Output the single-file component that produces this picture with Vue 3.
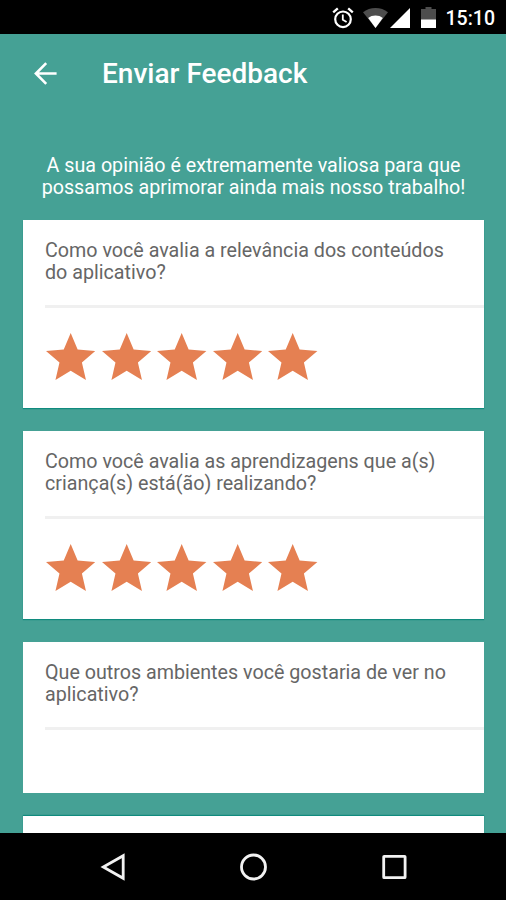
<script setup>
const intro = [
  "A sua opinião é extremamente valiosa para que",
  "possamos aprimorar ainda mais nosso trabalho!",
];

const cards = [
  {
    lines: ["Como você avalia a relevância dos conteúdos", "do aplicativo?"],
    stars: 5,
  },
  {
    lines: ["Como você avalia as aprendizagens que a(s)", "criança(s) está(ão) realizando?"],
    stars: 5,
  },
  {
    lines: ["Que outros ambientes você gostaria de ver no", "aplicativo?"],
    stars: 0,
  },
];
</script>

<template>
  <div class="screen">
    <div class="status-bar">
      <svg class="alarm" width="22" height="22" viewBox="0 0 22 22" fill="none" stroke="#fff">
        <circle cx="11" cy="12.3" r="7.8" stroke-width="2.2" />
        <path d="M1.2 5.3L5.8 1.4M20.8 5.3L16.2 1.4" stroke-width="2.4" />
        <path d="M10.8 7.5v5.2l3.8 2.3" stroke-width="1.8" />
      </svg>
      <svg class="wifi" width="25" height="20" viewBox="0 0 25 20">
        <path d="M12.5 20L0 4.3C3.5 1.5 7.8 0 12.5 0S21.5 1.5 25 4.3z" fill="#4d4d4d" />
        <path d="M12.5 20L5.2 10C9 6.7 16 6.7 19.8 10z" fill="#fff" />
      </svg>
      <svg class="signal" width="20" height="20" viewBox="0 0 20 20">
        <path d="M20 0v20H0z" fill="#fff" />
      </svg>
      <svg class="battery" width="15" height="21" viewBox="0 0 15 21">
        <path d="M4.5 0h6v2H15v11H0V2h4.5z" fill="#4d4d4d" />
        <path d="M0 12.5h15V21H0z" fill="#fff" />
      </svg>
      <span class="clock">15:10</span>
    </div>

    <header class="toolbar">
      <svg width="23" height="23" viewBox="0 0 23 23" fill="none" stroke="#fff" stroke-width="2.6">
        <path d="M12.2 1.2L1.9 11.5l10.3 10.3M2 11.5h20.6" />
      </svg>
      <h1 class="title">Enviar Feedback</h1>
    </header>

    <main class="content">
      <p class="intro">
        <span v-for="line in intro" :key="line" class="line">{{ line }}</span>
      </p>

      <section v-for="(card, i) in cards" :key="i" class="card" :class="{ raised: card.stars }">
        <p class="question">
          <span v-for="line in card.lines" :key="line" class="line">{{ line }}</span>
        </p>
        <div class="answer" :class="{ rated: card.stars }">
          <svg v-for="n in card.stars" :key="n" class="star" viewBox="2 2 20 19">
            <path d="M12 17.27L18.18 21l-1.64-7.03L22 9.24l-7.19-.61L12 2 9.19 8.63 2 9.24l5.46 4.73L5.82 21z" />
          </svg>
        </div>
      </section>

      <section class="card next"></section>
    </main>

    <nav class="nav-bar">
      <svg width="28" height="30" viewBox="0 0 28 30">
        <path d="M25.2 3.7v22.6L5.3 15z" />
      </svg>
      <svg width="28" height="30" viewBox="0 0 28 30">
        <circle cx="14.5" cy="15" r="12" />
      </svg>
      <svg width="28" height="30" viewBox="0 0 28 30">
        <rect x="3.7" y="4.3" width="21.4" height="21.4" rx=".5" />
      </svg>
    </nav>
  </div>
</template>

<style>
body {
  margin: 0;
  background: #000;
}
</style>

<style scoped>
.screen {
  width: 506px;
  height: 900px;
  display: flex;
  flex-direction: column;
  overflow: hidden;
  background: #45a195;
  font-family: Roboto, "Liberation Sans", sans-serif;
}

.status-bar {
  flex: none;
  height: 34px;
  box-sizing: border-box;
  padding: 1px 11px 0 0;
  display: flex;
  justify-content: flex-end;
  align-items: center;
  background: #000;
}

.alarm {
  margin-right: 9px;
}

.wifi {
  margin-right: 2px;
}

.signal {
  margin-right: 11px;
}

.battery {
  margin-right: 10px;
}

.clock {
  font-size: 19.5px;
  font-weight: 500;
  line-height: 32px;
  color: #fff;
  padding-top: 2px;
}

.toolbar {
  flex: none;
  height: 79px;
  box-sizing: border-box;
  padding-left: 34px;
  display: flex;
  align-items: center;
  gap: 45px;
}

.title {
  margin: 0;
  font-size: 28px;
  font-weight: 500;
  color: #fff;
}

.content {
  flex: 1;
  min-height: 0;
  overflow: hidden;
  padding: 42px 22px 0 23px;
}

.line {
  display: block;
  white-space: nowrap;
}

.intro {
  margin: 0 0 21px;
  font-size: 19.7px;
  line-height: 22px;
  text-align: center;
  color: #fff;
}

.card {
  margin-bottom: 23px;
  background: #fff;
}

.raised {
  box-shadow: 0 1px 1px #108b7e;
}

.question {
  margin: 0 0 0 22px;
  padding: 20px 0 21px;
  border-bottom: 3px solid #f0f0f0;
  font-size: 19.7px;
  line-height: 22px;
  color: #666;
}

.answer {
  height: 63px;
}

.answer.rated {
  height: 75px;
  padding: 25px 0 0;
  display: flex;
  align-items: flex-start;
  gap: 6.2px;
  margin-left: 23px;
}

.star {
  width: 49.4px;
  height: 47px;
  fill: #e58052;
}

.next {
  height: 40px;
  box-shadow: 0 -1px 1px #108b7e;
}

.nav-bar {
  flex: none;
  height: 67px;
  box-sizing: border-box;
  padding: 0 98px;
  display: flex;
  justify-content: space-between;
  align-items: center;
  background: #000;
}

.nav-bar svg {
  fill: none;
  stroke: #f2f2f2;
  stroke-width: 2.8;
}
</style>
